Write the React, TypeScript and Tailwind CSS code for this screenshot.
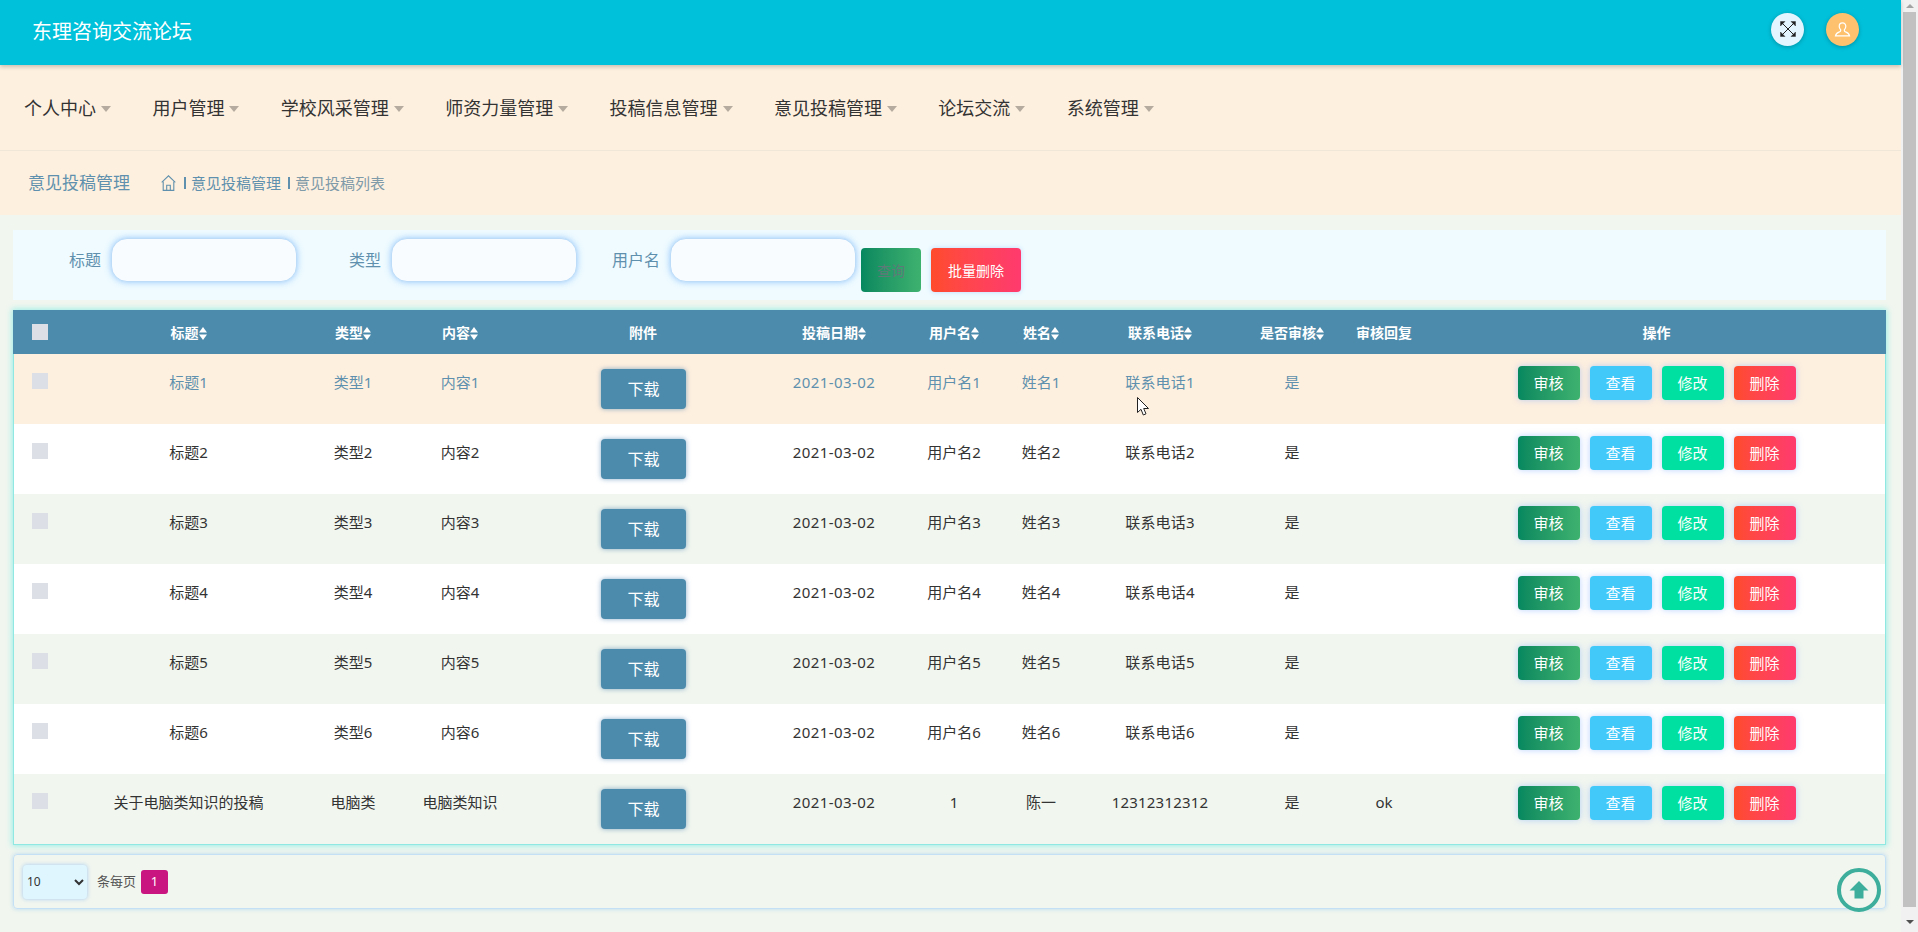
import { Fragment } from "react";

const menus = ["个人中心", "用户管理", "学校风采管理", "师资力量管理", "投稿信息管理", "意见投稿管理", "论坛交流", "系统管理"];

const rows = [
  { title: "标题1", type: "类型1", content: "内容1", user: "用户名1", name: "姓名1", phone: "联系电话1", reply: "" },
  { title: "标题2", type: "类型2", content: "内容2", user: "用户名2", name: "姓名2", phone: "联系电话2", reply: "" },
  { title: "标题3", type: "类型3", content: "内容3", user: "用户名3", name: "姓名3", phone: "联系电话3", reply: "" },
  { title: "标题4", type: "类型4", content: "内容4", user: "用户名4", name: "姓名4", phone: "联系电话4", reply: "" },
  { title: "标题5", type: "类型5", content: "内容5", user: "用户名5", name: "姓名5", phone: "联系电话5", reply: "" },
  { title: "标题6", type: "类型6", content: "内容6", user: "用户名6", name: "姓名6", phone: "联系电话6", reply: "" },
  { title: "关于电脑类知识的投稿", type: "电脑类", content: "电脑类知识", user: "1", name: "陈一", phone: "12312312312", reply: "ok" },
];

const columns = [
  { label: "标题", sort: true, width: "w-[243px]" },
  { label: "类型", sort: true, width: "w-[86px]" },
  { label: "内容", sort: true, width: "w-[128px]" },
  { label: "附件", sort: false, width: "w-[238px]" },
  { label: "投稿日期", sort: true, width: "w-[144px]" },
  { label: "用户名", sort: true, width: "w-[96px]" },
  { label: "姓名", sort: true, width: "w-[78px]" },
  { label: "联系电话", sort: true, width: "w-[160px]" },
  { label: "是否审核", sort: true, width: "w-[104px]" },
  { label: "审核回复", sort: false, width: "w-[80px]" },
];

const rowStyles = [
  "bg-[#fef0df] text-[#5f90ad]",
  "bg-white text-[#333333]",
  "bg-[#f1f6ef] text-[#333333]",
  "bg-white text-[#333333]",
  "bg-[#f1f6ef] text-[#333333]",
  "bg-white text-[#333333]",
  "bg-[#f1f6ef] text-[#333333]",
];

function SortIcon() {
  return (
    <svg viewBox="0 0 8 13" className="inline-block w-2 h-[13px] align-[-2px]" fill="currentColor">
      <path d="M4 0 8 5.500H0Z" />
      <path d="M4 13 0 7.500H8Z" />
    </svg>
  );
}

function ExpandIcon() {
  return (
    <svg viewBox="0 0 16 16" className="w-4 h-4 text-[#222222]" fill="currentColor" stroke="currentColor">
      <path d="M2 2 14 14M14 2 2 14" strokeWidth="1" fill="none" />
      <path d="M0.500 0.500H5L0.500 5Z" strokeWidth="0.400" />
      <path d="M15.500 0.500H11L15.500 5Z" strokeWidth="0.400" />
      <path d="M0.500 15.500H5L0.500 11Z" strokeWidth="0.400" />
      <path d="M15.500 15.500H11L15.500 11Z" strokeWidth="0.400" />
    </svg>
  );
}

function UserIcon() {
  return (
    <svg viewBox="0 0 18 16" className="w-[17px] h-[15px]" fill="none" stroke="white" strokeWidth="1.300">
      <path d="M9 1C6.800 1 5.500 2.500 5.500 4.600c0 1.500.6 2.800 1.500 3.600v1c0 .6-.5 1-1.300 1.300C3.600 11.200 2 12 1.500 14.800h15C16 12 14.400 11.200 12.300 10.500c-.8-.3-1.300-.7-1.300-1.300v-1c.9-.8 1.500-2.100 1.500-3.600C12.500 2.500 11.200 1 9 1Z" />
    </svg>
  );
}

function HomeIcon() {
  return (
    <svg viewBox="0 0 15 16" className="w-[15px] h-[16px]" fill="none" stroke="#5f90ad" strokeWidth="1.100">
      <path d="M0.700 7.300 7.500 0.800l6.800 6.500" />
      <path d="M2.200 6.500v8.900h10.600V6.500" />
      <path d="M5.700 15.400v-5.200h3.600v5.200" />
    </svg>
  );
}

function ActionButton({ label, color }: { label: string; color: string }) {
  return (
    <button className={`w-[62px] h-[34px] rounded-[4px] text-white text-[15px] shadow-[0_0_6px_rgba(120,170,255,0.5)] ${color}`}>
      {label}
    </button>
  );
}

export default function App() {
  return (
    <div className="relative flex h-[932px] overflow-hidden bg-[#f1f6ef] font-['Noto_Sans','Noto_Sans_CJK_SC',sans-serif]">
      <div className="w-[1901px] shrink-0">
        <header className="relative z-10 flex h-[65px] items-center bg-[#00c1da] pl-[32px] shadow-[0_2px_4px_rgba(0,0,0,0.2)]">
          <div className="flex-1 pb-[2px] text-[20px] text-white">东理咨询交流论坛</div>
          <div className="flex items-center gap-[22px] pr-[42px] pb-[7px]">
            <div className="flex w-[33px] h-[33px] items-center justify-center rounded-full bg-[#e3f6ff] shadow-[0_1px_4px_rgba(0,0,0,0.25)]">
              <ExpandIcon />
            </div>
            <div className="flex w-[33px] h-[33px] items-center justify-center rounded-full bg-[#fec26f] shadow-[0_1px_4px_rgba(0,0,0,0.25)]">
              <UserIcon />
            </div>
          </div>
        </header>

        <nav className="flex h-[86px] items-center gap-[41.4px] border-b border-[#f1e7d9] bg-[#fef0df] pl-6 pt-[2px] text-[18px] text-[#333333]">
          {menus.map((m) => (
            <div key={m} className="flex items-center">
              <span>{m}</span>
              <span className="ml-[5px] w-0 h-0 border-x-[5.5px] border-x-transparent border-t-[6px] border-t-[#b5ab9f]" />
            </div>
          ))}
        </nav>

        <div className="flex h-[64px] items-center bg-[#fef0df] pl-[28px] text-[#5f90ad]">
          <span className="w-[133px] text-[17px]">意见投稿管理</span>
          <HomeIcon />
          <span className="ml-2 mr-[5.5px] h-[12px] w-[1.5px] bg-[#5f90ad]" />
          <span className="text-[15px]">意见投稿管理</span>
          <span className="ml-[7px] mr-[5.5px] h-[12px] w-[1.5px] bg-[#5f90ad]" />
          <span className="text-[15px] text-[#7f9aa8]">意见投稿列表</span>
        </div>

        <main className="pl-[13px] pr-[15px] pt-[15px]">
          <div className="flex h-[70px] items-start bg-[#effbff]">
            {[
              { label: "标题", width: "w-[88px]" },
              { label: "类型", width: "w-[84px]" },
              { label: "用户名", width: "w-[83px]" },
            ].map((f) => (
              <Fragment key={f.label}>
                <label className={`mt-[18px] ${f.width} mr-[10px] text-right text-[16px] text-[#5f90ad]`}>{f.label}</label>
                <input className="mt-2 h-[44px] w-[186px] rounded-[16px] border border-[#bcdcf8] bg-[#f9fcff] shadow-[0_0_6px_rgba(110,175,250,0.7)] outline-none" />
              </Fragment>
            ))}
            <button className="mt-[18px] ml-[5px] h-[44px] w-[60px] rounded-[4px] bg-gradient-to-r from-[#05885f] to-[#3db26f] text-[14px] text-[#5d7a78]">
              查询
            </button>
            <button className="mt-[18px] ml-[10px] h-[44px] w-[90px] rounded-[4px] bg-gradient-to-r from-[#ff4b2b] to-[#ff3a6e] text-[14px] text-white shadow-[0_0_5px_rgba(120,170,255,0.4)]">
              批量删除
            </button>
          </div>

          <div className="mt-[10px] border-x border-b border-[#8fe8e2] shadow-[0_0_6px_1px_#9beee6]">
            <table className="w-full table-fixed border-separate border-spacing-0 text-center text-[15px]">
              <thead>
                <tr className="h-[44px] bg-[#4d8bac] text-[14px] text-white">
                  <th className="w-[53px] pl-[18px] text-left align-middle shadow-[-1px_0_0_#4d8bac]">
                    <div className="h-4 w-4 bg-[#dcdfe6]" />
                  </th>
                  {columns.map((c) => (
                    <th key={c.label} className={`${c.width} font-bold`}>
                      {c.label}
                      {c.sort && <SortIcon />}
                    </th>
                  ))}
                  <th className="pl-[4px] font-bold shadow-[1px_0_0_#4d8bac]">操作</th>
                </tr>
              </thead>
              <tbody>
                {rows.map((r, i) => (
                  <tr key={i} className={`h-[70px] ${rowStyles[i]}`}>
                    <td className="pl-[18px] pt-[19px] align-top">
                      <div className="h-4 w-4 bg-[#dcdfe6]" />
                    </td>
                    <td className="pt-[17px] align-top">{r.title}</td>
                    <td className="pt-[17px] align-top">{r.type}</td>
                    <td className="pt-[17px] align-top">{r.content}</td>
                    <td className="pt-[15px] align-top">
                      <button className="ml-[1px] h-[40px] w-[85px] rounded-[4px] bg-[#4d8bac] text-[16px] text-white shadow-[0_0_5px_rgba(60,120,170,0.6)]">
                        下载
                      </button>
                    </td>
                    <td className="pt-[17px] align-top tracking-[0.4px]">2021-03-02</td>
                    <td className="pt-[17px] align-top">{r.user}</td>
                    <td className="pt-[17px] align-top">{r.name}</td>
                    <td className="pt-[17px] align-top tracking-[0.2px]">{r.phone}</td>
                    <td className="pt-[17px] align-top">是</td>
                    <td className="pt-[17px] align-top">{r.reply}</td>
                    <td className="pl-[4px] pt-3 align-top">
                      <div className="flex justify-center gap-[10px]">
                        <ActionButton label="审核" color="bg-gradient-to-r from-[#05885f] to-[#3db26f]" />
                        <ActionButton label="查看" color="bg-[#42c9fa]" />
                        <ActionButton label="修改" color="bg-[#00e1a1]" />
                        <ActionButton label="删除" color="bg-gradient-to-r from-[#ff4b2b] to-[#ff3a6e]" />
                      </div>
                    </td>
                  </tr>
                ))}
              </tbody>
            </table>
          </div>

          <div className="mt-[9px] flex h-[55px] items-center rounded-[4px] border border-[#c4e0f5] pl-[9px] shadow-[0_0_4px_rgba(130,190,240,0.5)]">
            <select className="h-[34px] w-[64px] rounded-[4px] bg-[#dff6ff] text-[12px] text-[#333333] shadow-[0_0_4px_rgba(110,170,240,0.6)] outline-none">
              <option>10</option>
            </select>
            <span className="ml-[10px] text-[13px] text-[#555555]">条每页</span>
            <span className="ml-[5px] flex h-6 w-[27px] items-center justify-center rounded-[3px] bg-[#c9157f] text-[13px] text-white">1</span>
          </div>
        </main>
      </div>

      <div className="flex w-[17px] shrink-0 flex-col items-center bg-[#f1f1f1]">
        <div className="flex h-[12px] w-[13px] items-center justify-center">
          <span className="w-0 h-0 border-x-[4px] border-x-transparent border-b-[4px] border-b-[#a3a3a3]" />
        </div>
        <div className="h-[895px] w-[13px] bg-[#c1c1c1]" />
        <div className="flex flex-1 w-[13px] items-center justify-center pt-[5px]">
          <span className="w-0 h-0 border-x-[4px] border-x-transparent border-t-[4px] border-t-[#505050]" />
        </div>
      </div>

      {/* back to top */}
      <div className="absolute left-[1837px] top-[868px] flex h-[44px] w-[44px] items-center justify-center rounded-full border-[4px] border-[#3cae9b] bg-[#f1f6ef]">
        <svg viewBox="0 0 20 20" className="h-5 w-5" fill="#3cae9b">
          <path d="M10 1 19.500 10.500H14.500V18.500H5.500V10.500H0.500Z" />
        </svg>
      </div>

      {/* mouse pointer */}
      <svg viewBox="0 0 13 20" className="absolute left-[1137px] top-[397px] h-5 w-[13px]" fill="white" stroke="#222222" strokeWidth="1">
        <path d="M0.500 0.500V15.500L4 12.300 6.300 18 9 16.800 6.700 11.500H11.500Z" />
      </svg>
    </div>
  );
}
